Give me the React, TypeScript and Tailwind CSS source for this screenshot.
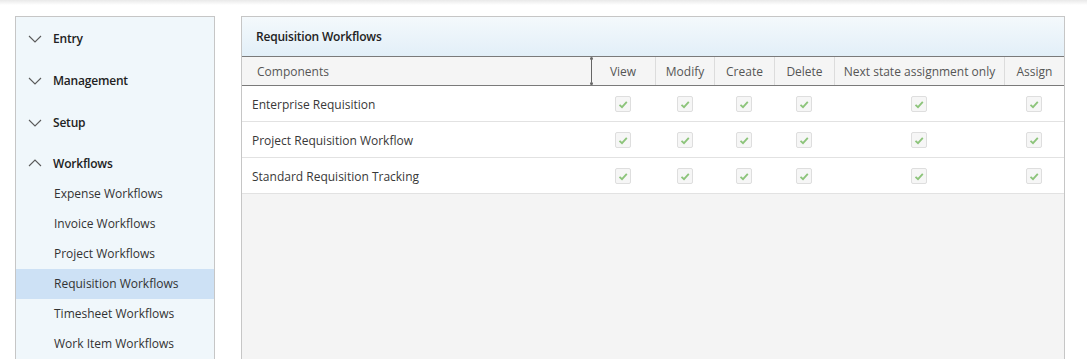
import React from "react";

const font = { fontFamily: '"Open Sans", "Liberation Sans", sans-serif' };

const sections = ["Entry", "Management", "Setup"];
const workflows = [
  "Expense Workflows",
  "Invoice Workflows",
  "Project Workflows",
  "Requisition Workflows",
  "Timesheet Workflows",
  "Work Item Workflows",
];
const columns = ["View", "Modify", "Create", "Delete", "Next state assignment only", "Assign"];
const rows = [
  "Enterprise Requisition",
  "Project Requisition Workflow",
  "Standard Requisition Tracking",
];

const Chevron = ({ up }: { up?: boolean }) => (
  <svg width="14" height="8" viewBox="0 0 14 8" className="shrink-0">
    <polyline
      points={up ? "1,7 7,1 13,7" : "1,1 7,7 13,1"}
      fill="none"
      stroke="#5a5a5a"
      strokeWidth="1.1"
    />
  </svg>
);

const Check = () => (
  <div className="flex h-4 w-4 items-center justify-center rounded-[2px] border border-[#dedede] bg-[#f6f6f6]">
    <svg width="10" height="9" viewBox="0 0 10 9">
      <polyline points="1.5,4.8 4,7.2 8.8,1.8" fill="none" stroke="#8cc47a" strokeWidth="1.8" />
    </svg>
  </div>
);

const gridCols = "grid grid-cols-[349px_64px_59px_60px_60px_170px_1fr]";

export default function App() {
  return (
    <div className="h-[359px] w-full overflow-hidden bg-white" style={font}>
      <div className="h-[5px] bg-linear-to-b from-[#e9e9e9] to-white" />
      <div className="flex gap-[26px] pl-[15px] pr-[22px] pt-[11px]">
        <aside className="h-[400px] w-[200px] shrink-0 border border-[#c6c6c6] bg-[#f0f7fb]">
          {sections.map((s) => (
            <div key={s} className="flex h-[42px] items-center gap-[11px] pl-[12px] pt-[2px] text-[12px] font-semibold tracking-[-0.2px] text-[#222]">
              <Chevron />
              {s}
            </div>
          ))}
          <div className="flex h-[36px] items-start gap-[11px] pl-[12px] pt-[12px] text-[12px] font-semibold tracking-[-0.2px] text-[#222]">
            <span className="mt-[4px]">
              <Chevron up />
            </span>
            Workflows
          </div>
          {workflows.map((w) => (
            <div
              key={w}
              className={`flex h-[30px] items-center pl-[38px] text-[12px] text-[#333] ${
                w === "Requisition Workflows" ? "bg-[#cde1f5]" : ""
              }`}
            >
              {w}
            </div>
          ))}
        </aside>

        <section className="flex h-[400px] flex-1 flex-col border border-[#c6c6c6] bg-[#f4f4f4]">
          <div className="flex h-[39px] items-center bg-linear-to-b from-[#f4f9fc] to-[#e2eff8] pl-[14px] pt-px text-[12px] font-semibold tracking-[-0.2px] text-[#222]">
            Requisition Workflows
          </div>
          <div className={`${gridCols} relative h-[30px] border-y border-[#7a7a7a] bg-[#f5f5f5] text-[12px] text-[#555]`}>
            <div className="flex items-center pl-[15px] pt-px">Components</div>
            {columns.map((c, i) => (
              <div key={c} className={`flex items-center justify-center pt-px ${i > 0 ? "border-l border-[#dcdcdc]" : ""}`}>
                {c}
              </div>
            ))}
            <div className="absolute left-[348px] top-0 flex h-full w-[3px] flex-col items-center justify-between">
              <div className="h-[3px] w-[3px] rounded-full bg-[#666]" />
              <div className="w-px flex-1 bg-[#666]" />
              <div className="h-[3px] w-[3px] rounded-full bg-[#666]" />
            </div>
          </div>
          {rows.map((r) => (
            <div key={r} className={`${gridCols} h-[36px] border-b border-[#e2e2e2] bg-white text-[12px] text-[#383838]`}>
              <div className="flex items-center pl-[10px] pt-[2px]">{r}</div>
              {columns.map((c) => (
                <div key={c} className="flex items-center justify-center pt-px">
                  <Check />
                </div>
              ))}
            </div>
          ))}
        </section>
      </div>
    </div>
  );
}
